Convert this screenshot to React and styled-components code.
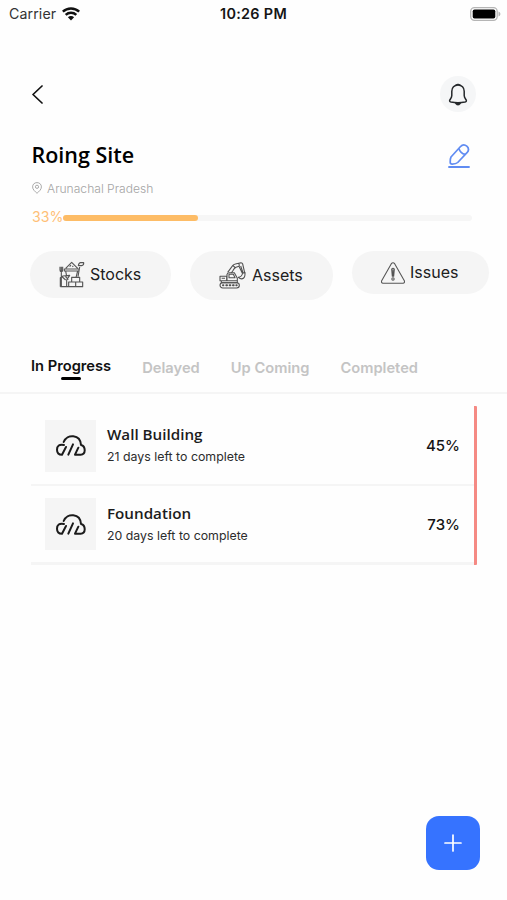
import React, { useState } from 'react'
import styled, { createGlobalStyle } from 'styled-components'

const GlobalStyle = createGlobalStyle`
    * {
        box-sizing: border-box;
    }

    body {
        margin: 0;
        background: #fefefe;
        font-family: Inter, 'Liberation Sans', sans-serif;
        color: #151515;
    }

    button {
        border: 0;
        padding: 0;
        background: none;
        font: inherit;
        color: inherit;
    }
`

const Screen = styled.div`
    width: 507px;
    height: 900px;
    display: flex;
    flex-direction: column;
    overflow: hidden;
`

const StatusBar = styled.div`
    height: 27px;
    padding: 0 6px 0 9px;
    display: grid;
    grid-template-columns: 1fr auto 1fr;
    align-items: center;
`

const Carrier = styled.div`
    display: flex;
    align-items: center;
    gap: 6px;
    font-size: 14.2px;
    letter-spacing: 0.1px;
    color: #333;
`

const Clock = styled.div`
    margin-right: 3px;
    font-size: 14.4px;
    font-weight: 600;
    letter-spacing: 0.3px;
`

const Battery = styled.div`
    display: flex;
    justify-content: flex-end;
`

const TopBar = styled.div`
    height: 85px;
    padding: 49px 31px 0 31px;
    display: flex;
    justify-content: space-between;
    align-items: center;
`

const IconButton = styled.button`
    display: flex;
`

const BellButton = styled.button`
    width: 36px;
    height: 36px;
    border-radius: 50%;
    background: #f5f6f7;
    display: flex;
    align-items: center;
    justify-content: center;
`

const TitleRow = styled.div`
    height: 30px;
    margin-top: 28px;
    padding: 0 37px 0 31.5px;
    display: flex;
    justify-content: space-between;
    align-items: center;
`

const Title = styled.h1`
    margin: 0;
    font-family: 'Open Sans', 'Noto Sans', sans-serif;
    font-size: 21.5px;
    font-weight: 600;
    line-height: 30px;
    color: #000;
`

const Location = styled.div`
    height: 20px;
    margin-top: 8px;
    padding-left: 32px;
    display: flex;
    align-items: center;
    gap: 5px;
    font-size: 12.1px;
    font-weight: 300;
    color: #a4a4a4;
`

const Progress = styled.div`
    height: 20px;
    margin-top: 9px;
    padding: 0 35px 0 32px;
    display: flex;
    align-items: center;
    color: #ffc077;
    font-size: 14.1px;
`

const Percent = styled.span`
    width: 31px;
    margin-top: -1px;
`

const Track = styled.div`
    flex: 1;
    height: 6px;
    margin-top: 2px;
    border-radius: 3px;
    background: #f6f6f6;
`

const Fill = styled.div`
    height: 6px;
    border-radius: 3px;
    background: #fdbc66;
`

const Actions = styled.div`
    height: 50px;
    margin-top: 24px;
    padding-left: 30px;
    display: flex;
    align-items: flex-start;
    gap: 19px;
`

const Pill = styled.button`
    flex: none;
    width: ${props => props.$width}px;
    height: ${props => props.$height}px;
    padding: 0 0 1px 29px;
    border-radius: 25px;
    background: #f5f5f5;
    display: flex;
    align-items: center;
    gap: ${props => props.$gap}px;
    font-size: 16px;
    color: #202020;

    svg {
        margin-top: 1px;
    }
`

const Tabs = styled.div`
    height: 93px;
    padding: 56px 0 0 31px;
    display: flex;
    align-items: flex-start;
    gap: 31px;
    border-bottom: 2px solid #f5f5f5;
`

const Tab = styled.button`
    height: 24px;
    padding-top: ${props => props.$active ? '0' : '2px'};
    display: flex;
    flex-direction: column;
    align-items: center;
    font-size: 14.7px;
    line-height: 18px;
    font-weight: 600;
    color: ${props => props.$active ? '#111' : '#c4c4c4'};

    &::after {
        content: '';
        width: ${props => props.$active ? '20px' : '0'};
        height: 3px;
        margin-top: 2px;
        border-radius: 2px;
        background: #000;
    }
`

const Tasks = styled.div`
    width: 446px;
    margin: 12px 0 0 31px;
    border-right: 3px solid #f58a84;
    border-radius: 1px;
`

const Task = styled.div`
    height: 80px;
    padding: 1px 14px 0 14px;
    display: flex;
    align-items: center;
    border-bottom: 2px solid #f5f5f5;

    &:last-child {
        height: 79px;
        padding-top: 0;
        border-bottom-width: 3px;
    }
`

const Thumb = styled.div`
    width: 51px;
    height: 52px;
    background: #f5f5f5;
    display: flex;
    align-items: center;
    justify-content: center;
`

const TaskText = styled.div`
    flex: 1;
    margin-left: 11px;
`

const TaskName = styled.div`
    font-family: 'Open Sans', 'Noto Sans', sans-serif;
    font-size: 15.2px;
    font-weight: 600;
    line-height: 21px;
    color: #1c1c1c;
`

const TaskNote = styled.div`
    padding-top: 1px;
    font-size: 12.35px;
    line-height: 21px;
    color: #2c2c2c;
`

const TaskPercent = styled.div`
    font-size: 15px;
    font-weight: 500;
`

const Footer = styled.div`
    margin-top: auto;
    padding: 0 27px 30.5px 0;
    display: flex;
    justify-content: flex-end;
`

const AddButton = styled.button`
    width: 54px;
    height: 54px;
    border-radius: 13px;
    background: #3673ff;
    display: flex;
    align-items: center;
    justify-content: center;
`

const WifiIcon = () => (
    <svg width="18" height="14" viewBox="0 0 18 14" fill="none" stroke="#111" strokeWidth="2.5">
        <path d="M.8 4.7C5.3.4 12.7.4 17.2 4.7" />
        <path d="M3.7 7.8c3-2.8 7.6-2.8 10.6 0" />
        <path d="M9 13.4 5.9 10.3a4.4 4.4 0 0 1 6.2 0z" fill="#111" stroke="none" />
    </svg>
)

const BatteryIcon = () => (
    <svg width="31" height="14" viewBox="0 0 31 14">
        <rect x=".7" y=".7" width="26.5" height="12.6" rx="3.8" fill="#fff" stroke="#b5b5b5" strokeWidth="1.3" />
        <rect x="2.7" y="2.5" width="22.6" height="9" rx="1.8" fill="#000" />
        <path d="M28.5 4.5c2.5 1 2.5 4 0 5z" fill="#b5b5b5" />
    </svg>
)

const BackIcon = () => (
    <svg width="12" height="19" viewBox="0 0 12 19" fill="none" stroke="#111" strokeWidth="1.7" strokeLinecap="round" strokeLinejoin="round">
        <path d="M11 1 2 9.5l9 8.5" />
    </svg>
)

const BellIcon = () => (
    <svg width="20" height="23" viewBox="0 0 20 23" fill="none" stroke="#25282b" strokeWidth="1.5" strokeLinejoin="round">
        <path d="M10 2C6.200 2 3.800 4.800 3.800 8.200v4.300c0 1.700-.8 2.700-1.700 4-1 1.500-.4 2.300.9 2.600 4.500.9 9.500.9 14 0 1.300-.3 1.900-1.100.9-2.600-.9-1.300-1.700-2.300-1.700-4V8.200C16.200 4.800 13.800 2 10 2z" />
        <path d="M7.600 1.900Q10-.1 12.400 1.900zM7 20h6q-1 2.200-3 2.200T7 20z" fill="#25282b" strokeWidth=".5" />
    </svg>
)

// bold pencil lying over a base line
const EditIcon = () => (
    <svg width="22" height="25" viewBox="0 0 22 25" fill="none" stroke="#608cf2" strokeWidth="1.7" strokeLinejoin="round">
        <path d="m3 14 9.300-10.300c2-2.200 4.500-2.300 6.500-.5s2.100 4.300.2 6.500L9.700 19.500c-1.400 1.300-3.500 1.600-5.500 1.700-1.500 0-2-.6-2-1.900 0-1.800.100-4 .8-5.300z" />
        <path d="M10.900 5.400q1.400 4.700 6.300 6" />
        <path d="M1 24h20" strokeWidth="1.900" strokeLinecap="round" />
    </svg>
)

const PinIcon = () => (
    <svg width="10" height="12" viewBox="0 0 10 12" fill="none" stroke="#aaa" strokeWidth="1">
        <path d="M5 .6C2.500.6.6 2.300.6 4.900.6 7.600 3 9.400 5 11.300c2-1.900 4.400-3.700 4.400-6.400C9.400 2.300 7.500.6 5 .6z" />
        <circle cx="5" cy="4.800" r="1.600" />
    </svg>
)

const StocksIcon = () => (
    <svg width="26" height="27" viewBox="0 0 78 81" fill="none" stroke="#555" strokeWidth="3.400" strokeLinejoin="round">
        <path d="M20 22 38 4l18 18M16 24h44v6H16zM20 30l3 16M56 30l-5 20M57 47l5-29M58 15q1-9 6-10h10q1 8-6 9H58" />
        <path d="M3 17v10q0 5 4 5t4-5V17M7 17v60M4 77V50l8-5 20-2-9 14v20M10 48l10 9M19 46l9 10" />
        <path d="M38 49h24v14H38zM29 63h42v14H29zM50 63v14M4 77h67" />
        <path d="m32 17 4-5M40 17l3-2" />
    </svg>
)

const AssetsIcon = () => (
    <svg width="27" height="27" viewBox="0 0 81 81" fill="none" stroke="#505050" strokeWidth="3.200" strokeLinejoin="round">
        <rect x="3" y="62" width="58" height="16" rx="8" />
        <path d="M12 70h1M22 70h2M32 70h2M42 70h2M52 70h1" strokeWidth="6" strokeLinecap="round" />
        <path d="M3 43h20v13H3zM7 56h48v6H7zM24 56V37q1-5 8-5h14l9 17v7M30 47V37h13l5 10zM8 49h10" />
        <path d="m26 31 15-20q3-4 8-5l17-4q4 0 5 4l6 26-7 2-10-21-9 3q-5 2-10 11l-4 6M42 11l8 7M60 5l1 9M65 12l7 20M71 33l7-2q1 13-4 17-7 6-16-2 11-2 13-13z" />
    </svg>
)

const IssuesIcon = () => (
    <svg width="24" height="22" viewBox="0 0 72 66" fill="none" stroke="#555" strokeWidth="3.200" strokeLinejoin="round">
        <path d="M31 5q5-6 10 0l29 51q2 7-4 8H6q-6-1-4-8z" />
        <path d="M32 21q4-5 8 0l-2 22h-4zM36 22v19" />
        <circle cx="36" cy="51" r="3.500" />
    </svg>
)

const CloudIcon = () => (
    <svg width="30" height="21" viewBox="0 0 90 63" fill="none" stroke="#1b1b1b" strokeWidth="6" strokeLinecap="round" strokeLinejoin="round">
        <path d="M23 21C33-4 73-3 75 30c15 4 15 29-1 29H57l10-21" />
        <path d="M24 30C10 26 3 34 3 44c0 9 6 15 15 15l12-23" />
        <path d="m37 59 14-31" />
    </svg>
)

const PlusIcon = () => (
    <svg width="18" height="18" viewBox="0 0 18 18" stroke="#fff" strokeWidth="1.7" strokeLinecap="round">
        <path d="M9 1v16M1 9h16" />
    </svg>
)

const tabs = ['In Progress', 'Delayed', 'Up Coming', 'Completed']

const tasks = [
    { name: 'Wall Building', days: 21, percent: 45 },
    { name: 'Foundation', days: 20, percent: 73 },
]

const App = () => {
    const [activeTab, setActiveTab] = useState(0);

    return (
        <>
            <GlobalStyle />
            <Screen>
                <StatusBar>
                    <Carrier>Carrier <WifiIcon /></Carrier>
                    <Clock>10:26 PM</Clock>
                    <Battery><BatteryIcon /></Battery>
                </StatusBar>

                <TopBar>
                    <IconButton aria-label='Back'><BackIcon /></IconButton>
                    <BellButton aria-label='Notifications'><BellIcon /></BellButton>
                </TopBar>

                <TitleRow>
                    <Title>Roing Site</Title>
                    <IconButton aria-label='Edit'><EditIcon /></IconButton>
                </TitleRow>
                <Location><PinIcon /> Arunachal Pradesh</Location>
                <Progress>
                    <Percent>33%</Percent>
                    <Track>
                        <Fill style={{ width: '33%' }} />
                    </Track>
                </Progress>

                <Actions>
                    <Pill $width={141} $height={47} $gap={5}><StocksIcon />Stocks</Pill>
                    <Pill $width={143} $height={49} $gap={6}><AssetsIcon />Assets</Pill>
                    <Pill $width={137} $height={43} $gap={5}><IssuesIcon />Issues</Pill>
                </Actions>

                <Tabs>
                    {
                        tabs.map((tab, index) => (
                            <Tab key={tab} $active={activeTab === index} onClick={() => setActiveTab(index)}>{tab}</Tab>
                        ))
                    }
                </Tabs>

                <Tasks>
                    {
                        tasks.map(task => (
                            <Task key={task.name}>
                                <Thumb><CloudIcon /></Thumb>
                                <TaskText>
                                    <TaskName>{task.name}</TaskName>
                                    <TaskNote>{task.days} days left to complete</TaskNote>
                                </TaskText>
                                <TaskPercent>{task.percent}%</TaskPercent>
                            </Task>
                        ))
                    }
                </Tasks>

                <Footer>
                    <AddButton aria-label='Add task'><PlusIcon /></AddButton>
                </Footer>
            </Screen>
        </>
    )
}

export default App
